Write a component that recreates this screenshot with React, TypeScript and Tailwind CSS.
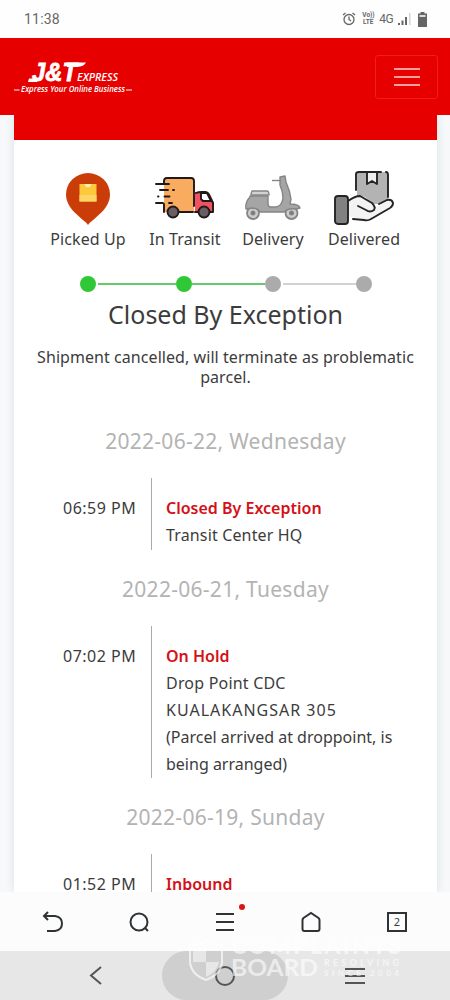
import { Fragment, type ReactNode } from "react";

const steps = [
    { label: "Picked Up", icon: <PinIcon />, box: "ml-[37px]" },
    { label: "In Transit", icon: <TruckIcon />, box: "ml-[23px]" },
    { label: "Delivery", icon: <ScooterIcon />, box: "ml-[14px]" },
    { label: "Delivered", icon: <HandIcon />, box: "ml-[17px]" },
];

const history = [
    {
        date: "2022-06-22, Wednesday",
        time: "06:59 PM",
        title: "Closed By Exception",
        lines: [{ text: "Transit Center HQ", tracking: "tracking-[0.15px]" }],
    },
    {
        date: "2022-06-21, Tuesday",
        time: "07:02 PM",
        title: "On Hold",
        lines: [
            { text: "Drop Point CDC", tracking: "tracking-[0.2px]" },
            { text: "KUALAKANGSAR 305", tracking: "tracking-[1px]" },
            { text: "(Parcel arrived at droppoint, is", tracking: "" },
            { text: "being arranged)", tracking: "" },
        ],
    },
    { date: "2022-06-19, Sunday", time: "01:52 PM", title: "Inbound", lines: [] },
];

function PinIcon() {
    return (
        <svg className="mt-0.5" width="44" height="52" viewBox="0 0 44 52">
            <path d="M22 52C18 46 0 37 0 21.500a22 21.500 0 0 1 44 0C44 37 26 46 22 52Z" fill="#cb3d08" />
            <path d="M13.500 11h17v17.500h-17z" fill="#fcc83c" />
            <path d="M13.500 22h17v6.500h-17z" fill="#fdd466" />
            <path d="M18.500 11h7l-1.500 3h-4z" fill="#fff0ba" />
        </svg>
    );
}

function TruckIcon() {
    return (
        <svg width="60" height="44" viewBox="0 0 60 44" fill="none" stroke="#20191a" strokeWidth="1.900" strokeLinecap="round" strokeLinejoin="round">
            <path d="M9 2h30v34H9z" fill="#f9ac60" stroke="none" />
            <path d="M40 16h10l5 2 4 9v9H40z" fill="#f05261" stroke="none" />
            <path d="M46 17h6l4 8h-8l-2-2z" fill="#fff" />
            <path d="M9 7V5q0-3 3-3h24q3 0 3 3v25M41 17q2-1 6-1h3q3 0 4 3l4 8v9h-3M24 36h14m2 0h3M9 28v8" />
            <path d="M1 8h13M5 14h8m5 0h1M3 20.500h.5m6 0h5M1 27h7m6 0h3" />
            <circle cx="18" cy="36" r="5.500" fill="#695e63" />
            <circle cx="49" cy="36" r="5.500" fill="#695e63" />
        </svg>
    );
}

function ScooterIcon() {
    return (
        <svg width="56" height="46" viewBox="0 0 56 46" fill="none" stroke="#858585" strokeWidth="1.400" strokeLinejoin="round">
            <circle cx="8" cy="38" r="6" fill="#ccc" strokeWidth="1.800" />
            <circle cx="46.500" cy="38" r="6" fill="#ccc" strokeWidth="1.800" />
            <circle cx="8" cy="38" r="1.800" fill="#777" />
            <circle cx="46.500" cy="38" r="1.800" fill="#777" />
            <path d="M5 21h18v8q0 3 3 3h5q6-1 7-9 0-6-3-13V2l5-1 1 6q4 9 5 17l-1 5q9 0 10 4l-4 1q-8-1-12 3H15q-2-4-8-4l-6 1q-1-7 4-12Z" fill="#a5a5a5" />
            <path d="M7 16h15q2 0 2 4H6q0-2 1-4Z" fill="#d2d2d2" />
            <path d="M27 5.500h9" />
        </svg>
    );
}

function HandIcon() {
    return (
        <svg width="60" height="56" viewBox="0 0 60 56" fill="none" stroke="#242424" strokeWidth="1.900" strokeLinecap="round" strokeLinejoin="round">
            <path d="M23 2h31v32H23z" fill="#b3b3b3" stroke="none" />
            <path d="M14 30q9-6 17-3l9 7 1 5 11-9q5-1 6 3-8 11-21 17-8 0-23-4z" fill="#f3f3f3" stroke="none" />
            <path d="M33 2h10v12l-5-3-5 3z" fill="#efefef" />
            <path d="M22 20V4q0-2 3-2h22m5 0q2 0 2 3v22" />
            <rect x="1" y="26" width="13" height="28" rx="3" fill="#818181" />
            <path d="M14 31q7-5 12-5l12 7q4 4 2 7-4 3-8 0l-8-4m21-2 8-4q5-1 6 3 0 3-3 5L37 49q-3 2-7 1l-11-1" />
        </svg>
    );
}

function StatusBar() {
    return (
        <div className="flex h-[38px] shrink-0 items-center bg-[#fefefe] pl-6 pr-[23px] text-[#666]">
            <span className="font-['Roboto'] text-[14px] tracking-[0.2px]">11:38</span>
            <svg className="ml-auto" width="14" height="14" viewBox="0 0 14 14" fill="none" stroke="currentColor" strokeWidth="1.300">
                <circle cx="7" cy="7.500" r="5" />
                <path d="M7 4.500v3l2 1.500M1 3l2.500-2M13 3l-2.500-2" />
            </svg>
            <div className="ml-1.5 flex w-3 flex-col text-center font-['Roboto'] text-[6.500px] font-bold leading-[7px]">
                <span>Vo))</span>
                <span>LTE</span>
            </div>
            <span className="ml-[5px] font-['Roboto'] text-[12px] tracking-[-0.6px]">4G</span>
            <svg className="ml-1" width="14" height="14" viewBox="0 0 14 14" fill="currentColor">
                <path d="M1 11h2v2H1zM4.500 8.500h2V13h-2zM8 5h2v8H8z" />
                <path d="M12 1h1.500v12H12z" fill="#d5d5d5" />
            </svg>
            <svg className="ml-[7px]" width="9" height="15" viewBox="0 0 9 15" fill="currentColor">
                <path d="M2.500 0h4v1.500H9V15H0V1.500h2.500z" />
                <path d="M1.500 3h6v2h-6z" fill="#ddd" />
            </svg>
        </div>
    );
}

function Logo() {
    return (
        <svg width="120" height="60" viewBox="0 0 120 60" fill="#fff" fontStyle="italic">
            <text x="18" y="34" fontFamily="Liberation Sans, sans-serif" fontSize="26" fontWeight="700" stroke="#fff" strokeWidth=".8" textLength="45" lengthAdjust="spacingAndGlyphs">J&amp;T</text>
            <path d="M15 31.500h8V35h-9zM53 15.500h19q-2 4-9 4.500H53z" />
            <text x="63" y="34" fontFamily="Open Sans, sans-serif" fontSize="10.500" fontWeight="600" textLength="41" lengthAdjust="spacingAndGlyphs">EXPRESS</text>
            <text x="7" y="45" fontFamily="Open Sans, sans-serif" fontSize="8" fontWeight="600" textLength="104" lengthAdjust="spacingAndGlyphs">Express Your Online Business</text>
            <path d="M0 42.500h5.500v1H0zM112 42.500h6v1h-6z" />
        </svg>
    );
}

function Progress() {
    return (
        <div className="flex h-4 items-center pl-[66px]">
            <i className="size-4 rounded-full bg-[#31c837]" />
            <i className="ml-0.5 h-[1.500px] w-[78px] bg-[#67c969]" />
            <i className="size-4 rounded-full bg-[#31c837]" />
            <i className="h-[1.500px] w-[73px] bg-[#67c969]" />
            <i className="size-4 rounded-full bg-[#ababab]" />
            <i className="ml-0.5 h-[1.500px] w-[73px] bg-[#d2d2d2]" />
            <i className="size-4 rounded-full bg-[#ababab]" />
        </div>
    );
}

function NavIcon({ children }: { children: ReactNode }) {
    return (
        <svg width="24" height="24" viewBox="0 0 24 24" fill="none" stroke="#303336" strokeWidth="2">
            {children}
        </svg>
    );
}

function Watermark() {
    return (
        <svg className="pointer-events-none absolute bottom-0 left-[185px]" width="220" height="75" viewBox="0 0 220 75" fill="#fff" fillOpacity=".6" fontFamily="Lato, sans-serif">
            <path d="M5 20q12 0 16-5 4 5 16 5v18q-2 12-16 17Q7 50 5 38Z" fill="none" stroke="#fff" strokeOpacity=".65" strokeWidth="2" />
            <path d="M8 23h13v14H8zM21 37h13q-2 10-13 15z" fillOpacity=".5" />
            <text x="46" y="29" fontSize="23" fontWeight="900" textLength="170">COMPLAINTS</text>
            <text x="46" y="51" fontSize="23" fontWeight="700" textLength="87" lengthAdjust="spacingAndGlyphs">BOARD</text>
            <text x="139" y="41" fontSize="9" fontWeight="700" textLength="75">RESOLVING</text>
            <text x="139" y="51" fontSize="8" fontWeight="700" textLength="75">SINCE 2004</text>
        </svg>
    );
}

export default function App() {
    return (
        <div className="relative flex h-[1000px] w-[450px] flex-col overflow-hidden bg-[#f6f8f9] font-['Noto_Sans','Open_Sans',sans-serif] text-[#3c3c3c]">
            <StatusBar />
            <header className="relative z-10 flex h-[77px] shrink-0 items-center justify-between bg-[#e70000] pl-3.5 pr-3">
                <Logo />
                <button className="flex h-11 w-[63px] items-center justify-center rounded-[3px] border border-[#f01d1d]">
                    <svg width="26" height="20" viewBox="0 0 26 20" stroke="#ff9e9e" strokeWidth="1.800">
                        <path d="M0 2h26M0 10h26M0 18h26" />
                    </svg>
                </button>
            </header>

            <main className="mx-3.5 h-[777px] w-[423px] shrink-0 overflow-hidden bg-white shadow-[0_0_8px_#dce1e3]">
                <div className="h-[25px] bg-[#e70000]" />
                <div className="flex h-[136px] pt-7">
                    {steps.map((step) => (
                        <div key={step.label} className={`flex w-[74px] flex-col items-center ${step.box}`}>
                            <div className="flex h-[60px] items-center">{step.icon}</div>
                            <span className="whitespace-nowrap text-[16px] leading-[22px] tracking-[0.1px]">{step.label}</span>
                        </div>
                    ))}
                </div>
                <Progress />
                <h1 className="mt-1.5 text-center text-[25px] leading-8">Closed By Exception</h1>
                <p className="mt-[17px] mb-[40px] text-center text-[16px] leading-5 tracking-[0.06px]">
                    Shipment cancelled, will terminate as problematic
                    <br />
                    parcel.
                </p>
                {history.map((entry) => (
                    <Fragment key={entry.date}>
                        <h2 className="text-center text-[21px] leading-[28px] tracking-[0.28px] text-[#b3b3b3]">{entry.date}</h2>
                        <div className="mt-[23px] mb-[25px] flex min-h-[72px] text-[16px] leading-[27px]">
                            <time className="w-[137px] pl-[49px] pt-4 leading-7 tracking-[0.5px]">{entry.time}</time>
                            <div className="border-l border-[#aaa] pl-3.5 pt-4">
                                <h3 className="font-semibold leading-7 text-[#d41117]">{entry.title}</h3>
                                {entry.lines.map((line) => (
                                    <p key={line.text} className={line.tracking}>{line.text}</p>
                                ))}
                            </div>
                        </div>
                    </Fragment>
                ))}
            </main>

            <nav className="grid h-[59px] shrink-0 grid-cols-5 items-center justify-items-center bg-[#fcfcfc] px-2.5">
                <NavIcon><path d="M7 2 3 6l4 4M3 6h11q7 1 7 7.500T14 21H6" /></NavIcon>
                <NavIcon><circle cx="12" cy="12" r="8.500" /><path d="m18 18 3 3" /></NavIcon>
                <div className="relative">
                    <NavIcon><path d="M3 4h18M3 12h18M3 20h18" /></NavIcon>
                    <i className="absolute -right-2 -top-1.5 size-1.5 rounded-full bg-[#dc1710]" />
                </div>
                <NavIcon><path d="M3.500 10q0-1 1-2L12 3l7.500 5q1 1 1 2v9q0 2-2 2h-13q-2 0-2-2z" /></NavIcon>
                <span className="flex size-5 items-center justify-center border-2 border-[#303336] text-[11px] leading-none">2</span>
            </nav>
            <div className="grid h-[49px] shrink-0 grid-cols-[162px_126px_1fr] items-center bg-[#e7e7e7]">
                <svg className="ml-[88px]" width="16" height="20" viewBox="0 0 16 20" fill="none" stroke="#555" strokeWidth="2">
                    <path d="M13 1 3 9.500 13 18" />
                </svg>
                <div className="flex h-[49px] items-center justify-center rounded-full bg-[#cfcfcf]">
                    <i className="size-5 rounded-full border-2 border-[#555]" />
                </div>
                <svg className="ml-[56px]" width="22" height="18" viewBox="0 0 22 18" stroke="#555" strokeWidth="2">
                    <path d="M1 2h20M1 9h20M1 16h20" />
                </svg>
            </div>
            <Watermark />
        </div>
    );
}
